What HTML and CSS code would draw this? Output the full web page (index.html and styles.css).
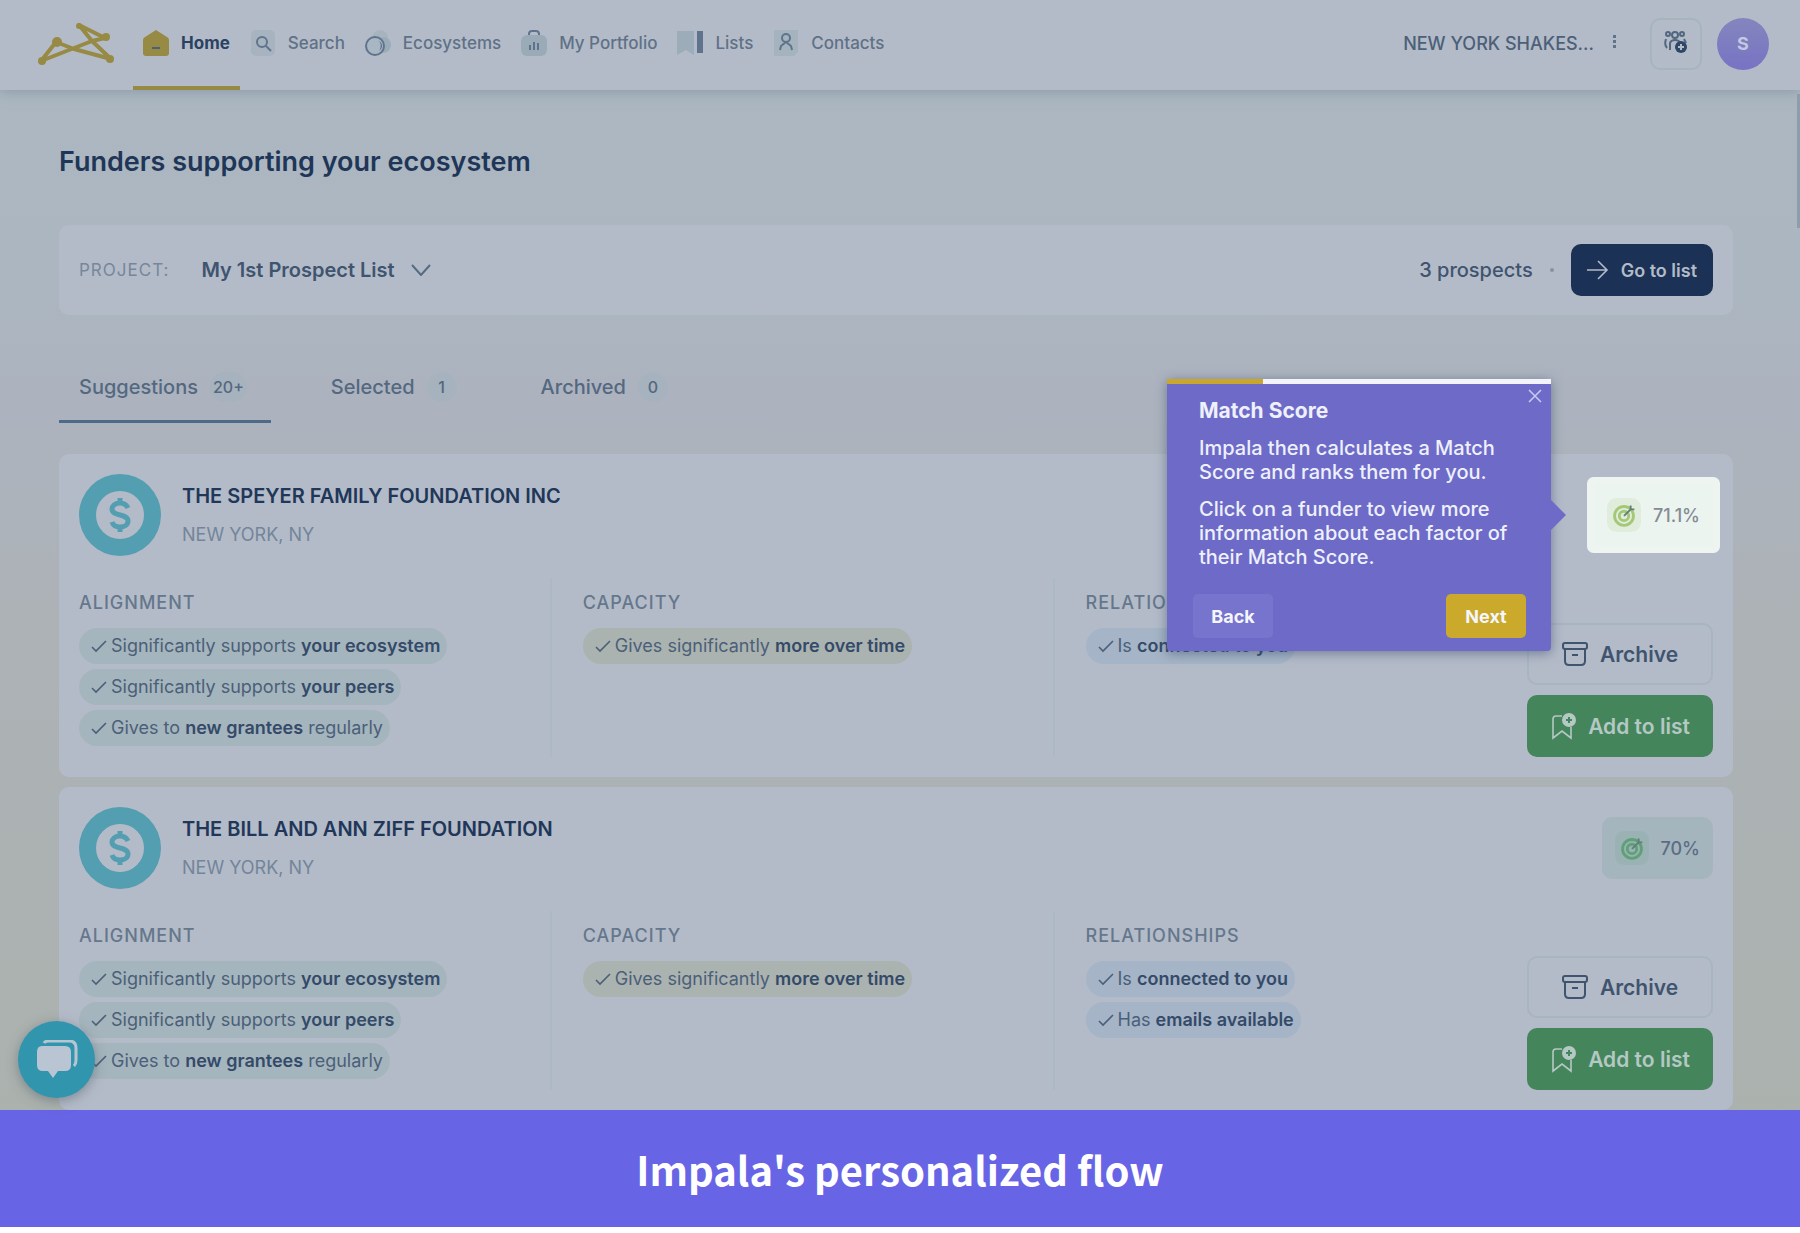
FILE: index.html
```html
<!DOCTYPE html>
<html lang="en">
<head>
    <meta charset="UTF-8">
    <meta name="viewport" content="width=device-width, initial-scale=1.0">
    <title>Impala</title>
    <link rel="stylesheet" href="styles.css">
</head>
<body>
    <!-- shared icons -->
    <svg class="sprite">
        <symbol id="check" viewBox="0 0 18 16"><path d="M2 9l4 4L16 3" fill="none" stroke="currentColor" stroke-width="1.6"/></symbol>
        <symbol id="dollar" viewBox="0 0 82 82">
            <circle cx="41" cy="41" r="41" fill="#549eb1"/>
            <circle cx="41" cy="41" r="24" fill="#b4bbc8"/>
            <path d="M49 34c-2-4-5-5-8-5-5 0-8 3-8 6 0 8 16 4 16 12 0 4-4 6-8 6s-7-2-8-5M41 24v6M41 52v6" fill="none" stroke="#549eb1" stroke-width="5"/>
        </symbol>
        <symbol id="target" viewBox="0 0 36 36">
            <rect width="36" height="36" rx="10" fill="currentColor" opacity=".14"/>
            <g fill="none" stroke="currentColor">
                <circle cx="18" cy="19" r="10" stroke-width="3"/>
                <circle cx="18" cy="19" r="5" stroke-width="3"/>
            </g>
            <path d="M18 19l7-7v-4M25 12h4" fill="none" stroke="#5f7f78" stroke-width="2"/>
        </symbol>
        <symbol id="archive" viewBox="0 0 26 26">
            <g fill="none" stroke="currentColor" stroke-width="2">
                <rect x="1" y="2" width="24" height="6" rx="2"/>
                <path d="M3 8v12q0 4 4 4h12q4 0 4-4V8M10 14h6"/>
            </g>
        </symbol>
        <symbol id="bookmark" viewBox="0 0 26 28">
            <path d="M12 4H6q-3 0-3 3v19l9-7 9 7V15" fill="none" stroke="currentColor" stroke-width="1.6"/>
            <circle cx="19" cy="8" r="7" fill="currentColor"/>
            <path d="M19 5v6M16 8h6" stroke="#45855c" stroke-width="2"/>
        </symbol>
    </svg>

    <div class="app">
        <header>
            <a href="#" class="logo" aria-label="Impala">
                <svg width="76" height="44" viewBox="0 0 76 44">
                    <path d="M3 39L18 20 36 27 73 37 54 19 41 3 67 16 54 19 3 39" fill="none" stroke="#978a45" stroke-width="4" stroke-linejoin="round"/>
                    <g fill="#978a45"><circle cx="4" cy="39" r="4"/><circle cx="19" cy="20" r="5"/><circle cx="41" cy="4" r="3"/><circle cx="68" cy="15" r="4"/><circle cx="72" cy="37" r="4"/></g>
                </svg>
            </a>
            <nav>
                <a href="#" class="active">
                    <svg width="26" height="26" viewBox="0 0 26 26"><path d="M13 0l11 7q2 1 2 3v13q0 3-3 3H3q-3 0-3-3V10q0-2 2-3z" fill="#978a45"/><path d="M9 18h8" stroke="#4c6179" stroke-width="2"/></svg>
                    Home
                </a>
                <a href="#">
                    <svg width="26" height="26" viewBox="0 0 26 26"><rect x="1" width="24" height="26" rx="5" fill="#a7b4c0"/><g fill="none" stroke="#5f748c" stroke-width="2"><circle cx="12" cy="12" r="5"/><path d="M16 16l5 5"/></g></svg>
                    Search
                </a>
                <a href="#">
                    <svg width="26" height="26" viewBox="0 0 26 26"><circle cx="15" cy="8" r="8" fill="#a7b4c0"/><circle cx="18" cy="15" r="8" fill="#9aabb9"/><circle cx="10" cy="16" r="9" fill="#a9b6c3" stroke="#5f748c" stroke-width="2"/><path d="M12 10c4 2 5 6 2 11 4-3 5-8-2-11z" fill="#5f748c"/></svg>
                    Ecosystems
                </a>
                <a href="#">
                    <svg width="26" height="26" viewBox="0 0 26 26"><path d="M8 7V4q0-3 3-3h4q3 0 3 3v3" fill="none" stroke="#5f748c" stroke-width="2"/><rect y="5" width="26" height="21" rx="6" fill="#9aabb7"/><path d="M9 20v-5M13 20v-8M17 20v-7" stroke="#5f748c" stroke-width="2"/></svg>
                    My Portfolio
                </a>
                <a href="#">
                    <svg width="26" height="26" viewBox="0 0 26 26"><path d="M0 1h17v24l-8-5-9 5z" fill="#9cacb8"/><path d="M20 1h6v22h-6z" fill="#5f748c"/></svg>
                    Lists
                </a>
                <a href="#">
                    <svg width="26" height="26" viewBox="0 0 26 26"><path d="M1 0h24v22l-4 4H1z" fill="#a5b3bf"/><g fill="none" stroke="#5f748c" stroke-width="2"><circle cx="13" cy="8" r="4"/><path d="M7 20l1-4 5-4 5 4 1 4"/></g></svg>
                    Contacts
                </a>
            </nav>
            <div class="account">
                <span class="org">NEW YORK SHAKES...</span>
                <button class="dots" aria-label="More">
                    <svg width="6" height="16" viewBox="0 0 6 16" fill="#5f748a"><rect x="1" y="1" width="3" height="3"/><rect x="1" y="6" width="3" height="3"/><rect x="1" y="11" width="3" height="3"/></svg>
                </button>
                <button class="invite" aria-label="Invite people">
                    <svg width="26" height="24" viewBox="0 0 26 24">
                        <g fill="none" stroke="#52677f" stroke-width="2"><circle cx="12" cy="5" r="3"/><circle cx="5" cy="4" r="2"/><circle cx="19" cy="4" r="2"/><path d="M7 20v-7q1-3 5-3t5 3M4 18q-3-3-1-9M21 9l2 4"/></g>
                        <circle cx="18" cy="17" r="6" fill="#2f4766"/><path d="M18 14v6M15 17h6" stroke="#b4bbc8" stroke-width="2"/>
                    </svg>
                </button>
                <button class="avatar">S</button>
            </div>
        </header>

        <main>
            <h1>Funders supporting your ecosystem</h1>

            <section class="project">
                <label for="project">PROJECT:</label>
                <select id="project">
                    <option>My 1st Prospect List</option>
                </select>
                <span class="count">3 prospects</span>
                <span class="sep"></span>
                <button class="goto">
                    <svg width="22" height="20" viewBox="0 0 22 20"><path d="M0 10h20M11 1l9 9-9 9" fill="none" stroke="currentColor" stroke-width="1.6"/></svg>
                    Go to list
                </button>
            </section>

            <div class="tabs">
                <button class="tab current">Suggestions <span>20+</span></button>
                <button class="tab">Selected <span>1</span></button>
                <button class="tab">Archived <span>0</span></button>
            </div>

            <article class="card">
                <div class="top">
                    <svg class="coin"><use href="#dollar"/></svg>
                    <div class="who">
                        <h2>THE SPEYER FAMILY FOUNDATION INC</h2>
                        <p>NEW YORK, NY</p>
                    </div>
                    <div class="score spotlight">
                        <svg><use href="#target"/></svg>71.1%
                        <!-- tour step, hangs off the highlighted score -->
                        <div class="tour">
                            <div class="progress"><div class="bar"></div></div>
                            <button class="close" aria-label="Close">
                                <svg width="14" height="14" viewBox="0 0 14 14"><path d="M1 1l12 12M13 1L1 13" stroke="currentColor" stroke-width="1.6"/></svg>
                            </button>
                            <h3>Match Score</h3>
                            <p>Impala then calculates a Match Score and ranks them for you.</p>
                            <p>Click on a funder to view more information about each factor of their Match Score.</p>
                            <div class="steps">
                                <button class="back">Back</button>
                                <button class="next">Next</button>
                            </div>
                        </div>
                    </div>
                </div>
                <div class="factors">
                    <div class="factor">
                        <h4>ALIGNMENT</h4>
                        <p class="pill"><svg><use href="#check"/></svg>Significantly supports <b>your ecosystem</b></p>
                        <p class="pill"><svg><use href="#check"/></svg>Significantly supports <b>your peers</b></p>
                        <p class="pill"><svg><use href="#check"/></svg>Gives to <b>new grantees</b> regularly</p>
                    </div>
                    <div class="factor">
                        <h4>CAPACITY</h4>
                        <p class="pill yellow"><svg><use href="#check"/></svg>Gives significantly <b>more over time</b></p>
                    </div>
                    <div class="factor">
                        <h4>RELATIONSHIPS</h4>
                        <p class="pill blue"><svg><use href="#check"/></svg>Is <b>connected to you</b></p>
                    </div>
                    <div class="actions">
                        <button class="archive"><svg><use href="#archive"/></svg>Archive</button>
                        <button class="add"><svg><use href="#bookmark"/></svg>Add to list</button>
                    </div>
                </div>
            </article>

            <article class="card">
                <div class="top">
                    <svg class="coin"><use href="#dollar"/></svg>
                    <div class="who">
                        <h2>THE BILL AND ANN ZIFF FOUNDATION</h2>
                        <p>NEW YORK, NY</p>
                    </div>
                    <div class="score"><svg><use href="#target"/></svg>70%</div>
                </div>
                <div class="factors">
                    <div class="factor">
                        <h4>ALIGNMENT</h4>
                        <p class="pill"><svg><use href="#check"/></svg>Significantly supports <b>your ecosystem</b></p>
                        <p class="pill"><svg><use href="#check"/></svg>Significantly supports <b>your peers</b></p>
                        <p class="pill"><svg><use href="#check"/></svg>Gives to <b>new grantees</b> regularly</p>
                    </div>
                    <div class="factor">
                        <h4>CAPACITY</h4>
                        <p class="pill yellow"><svg><use href="#check"/></svg>Gives significantly <b>more over time</b></p>
                    </div>
                    <div class="factor">
                        <h4>RELATIONSHIPS</h4>
                        <p class="pill blue"><svg><use href="#check"/></svg>Is <b>connected to you</b></p>
                        <p class="pill blue"><svg><use href="#check"/></svg>Has <b>emails available</b></p>
                    </div>
                    <div class="actions">
                        <button class="archive"><svg><use href="#archive"/></svg>Archive</button>
                        <button class="add"><svg><use href="#bookmark"/></svg>Add to list</button>
                    </div>
                </div>
            </article>
        </main>

        <div class="scroll"></div>
        <button class="chat" aria-label="Chat">
            <svg width="42" height="40" viewBox="0 0 42 40">
                <path d="M8 3Q9 1 13 1h20q7 0 7 7v12q0 4-2 6" fill="none" stroke="#b9c5d3" stroke-width="3"/>
                <path d="M6 6h23q6 0 6 6v13q0 6-6 6h-7l-5 7-5-7H7q-6 0-6-6V12q0-6 5-6z" fill="#b9c5d3"/>
            </svg>
        </button>
    </div>

    <footer>Impala's personalized flow</footer>
</body>
</html>
```

FILE: styles.css
```css
*{
    margin: 0;
    padding: 0;
    box-sizing: border-box;
}
body{
    background-color: #fff;
    font-family: Inter, "Liberation Sans", sans-serif;
    color: #3f546f;
}
button, select{
    font-family: inherit;
    color: inherit;
    background: none;
    border: none;
}
.sprite{
    display: none;
}
.app{
    position: relative;
    background: linear-gradient(#acb7c1 0%, #abb6c0 25%, #acb3bf 35%, #acb2b6 55%, #abb2ae 100%);
}

/* top bar */
header{
    height: 90px;
    display: flex;
    align-items: center;
    padding: 0 31px 0 38px;
    background-color: #b4bbc8;
    box-shadow: 0 2px 12px rgba(110, 130, 145, 0.5);
}
.logo{
    height: 46px;
    margin-right: 19px;
}
nav{
    display: flex;
    align-self: stretch;
}
nav a{
    display: flex;
    align-items: center;
    gap: 12px;
    padding: 0 10px;
    border-bottom: 4px solid transparent;
    font-size: 17px;
    font-weight: 500;
    color: #5f7187;
    text-decoration: none;
}
nav .active{
    color: #2b4262;
    font-weight: 700;
    border-color: #978a45;
}
.account{
    display: flex;
    align-items: center;
    margin-left: auto;
    padding-bottom: 3px;
}
.org{
    font-size: 18px;
    font-weight: 500;
    color: #4c6078;
}
.dots{
    padding: 8px 14px 8px 18px;
}
.invite{
    width: 52px;
    height: 52px;
    margin: 0 15px 0 18px;
    border: 2px solid #a5b4bf;
    border-radius: 10px;
}
.avatar{
    width: 52px;
    height: 52px;
    border-radius: 50%;
    background: linear-gradient(#8386bd, #7873c4);
    color: #c3c9e0;
    font-size: 18px;
    font-weight: 700;
}

main{
    padding: 54px 67px 0 59px;
}
h1{
    font-size: 27px;
    line-height: 36px;
    font-weight: 600;
    color: #1f3658;
}

/* project bar */
.project{
    height: 90px;
    display: flex;
    align-items: center;
    margin-top: 45px;
    padding: 0 20px;
    background-color: #b4bbc8;
    border-radius: 10px;
}
.project label{
    font-size: 17px;
    letter-spacing: 1px;
    color: #76879a;
}
.project select{
    appearance: none;
    margin-left: 32px;
    padding-right: 36px;
    font-size: 20px;
    font-weight: 600;
    background: url("data:image/svg+xml,%3Csvg xmlns='http://www.w3.org/2000/svg' width='20' height='12'%3E%3Cpath d='M1 1l9 10 9-10' fill='none' stroke='%23566b82' stroke-width='2'/%3E%3C/svg%3E") no-repeat right center;
}
.count{
    margin-left: auto;
    font-size: 20px;
    font-weight: 500;
}
.sep{
    width: 4px;
    height: 4px;
    margin: 0 17px;
    border-radius: 50%;
    background-color: #8494a6;
}
.goto{
    height: 52px;
    display: flex;
    align-items: center;
    gap: 12px;
    padding: 0 16px;
    border-radius: 10px;
    background-color: #1b3155;
    color: #b4bbc8;
    font-size: 18px;
    font-weight: 600;
}

/* tabs */
.tabs{
    display: flex;
    gap: 40px;
    margin: 52px 0 31px;
}
.tab{
    display: flex;
    align-items: center;
    gap: 12px;
    padding: 5px 24px 18px 20px;
    border-bottom: 3px solid transparent;
    font-size: 20px;
    font-weight: 500;
    color: #54687f;
}
.tab span{
    min-width: 30px;
    height: 30px;
    padding: 0 3px;
    border-radius: 15px;
    background-color: #a6b2bd;
    font-size: 16px;
    line-height: 30px;
}
.current{
    border-color: #4e6a88;
}

/* funder cards */
.card{
    padding: 20px;
    margin-bottom: 10px;
    background-color: #b4bbc8;
    border-radius: 10px;
}
.card:last-child{
    margin-bottom: 0;
}
.top{
    display: flex;
    align-items: center;
}
.coin{
    width: 82px;
    height: 82px;
}
.who{
    margin-left: 21px;
}
h2{
    font-size: 20px;
    line-height: 26px;
    font-weight: 600;
    color: #213759;
}
.who p{
    margin-top: 14px;
    font-size: 18px;
    line-height: 24px;
    color: #73859a;
}
.score{
    position: relative;
    height: 62px;
    display: flex;
    align-items: center;
    gap: 12px;
    margin-left: auto;
    padding: 0 13px;
    border-radius: 10px;
    background-color: #a5b5be;
    color: #5b6d83;
    font-size: 18px;
    font-weight: 500;
}
.score > svg{
    width: 34px;
    height: 36px;
    color: #5fa177;
}
.spotlight{
    background-color: #ebf4ee;
    box-shadow: 0 0 0 7px #eef5f1;
    border-radius: 2px;
    color: #848b95;
}
.spotlight > svg{
    color: #a5c877;
}
.factors{
    position: relative;
    display: grid;
    grid-template-columns: 4fr 4fr 5fr;
    margin-top: 22px;
}
.factor{
    height: 179px;
}
.factor + .factor{
    margin-left: -32px;
    padding-left: 31px;
    border-left: 2px solid #adb8c5;
}
h4{
    margin: 14px 0 14px;
    font-size: 18px;
    line-height: 22px;
    font-weight: 500;
    letter-spacing: 1px;
    color: #64778c;
}
.pill{
    width: fit-content;
    height: 36px;
    margin-bottom: 5px;
    padding: 0 7px 0 11px;
    border-radius: 18px;
    background-color: #a5b5bd;
    font-size: 18px;
    line-height: 36px;
    color: #4b5f79;
    white-space: nowrap;
}
.pill svg{
    width: 18px;
    height: 16px;
    margin-right: 3px;
    vertical-align: -2px;
}
.pill b{
    font-weight: 600;
    color: #344a69;
}
.yellow{
    background-color: #abb3b0;
}
.blue{
    background-color: #a5b4c6;
}
.actions{
    position: absolute;
    right: 0;
    bottom: 0;
    display: flex;
    flex-direction: column;
    gap: 10px;
}
.actions button{
    width: 186px;
    height: 62px;
    display: flex;
    align-items: center;
    justify-content: center;
    gap: 12px;
    border-radius: 10px;
    font-size: 21px;
    font-weight: 600;
}
.actions svg{
    width: 26px;
    height: 28px;
}
.archive{
    border: 2px solid #a7b4c1;
}
.add{
    background-color: #45855c;
    color: #b4c8c4;
}

/* tour popup */
.tour{
    position: absolute;
    z-index: 2;
    top: -105px;
    right: calc(100% + 43px);
    width: 384px;
    padding: 20px 25px 13px 32px;
    background-color: #6d6bc7;
    border-radius: 4px;
    box-shadow: 0 2px 12px rgba(60, 80, 110, 0.6);
    color: #eef0fc;
    font-size: 20px;
    line-height: 24px;
}
.tour::after{
    content: "";
    position: absolute;
    left: 100%;
    top: 121px;
    border: 15px solid transparent;
    border-left-color: #6d6bc7;
    border-right: none;
}
.progress{
    position: absolute;
    top: 0;
    left: 0;
    width: 100%;
    height: 5px;
    background-color: #f2f3fb;
}
.bar{
    width: 25%;
    height: 100%;
    background-color: #c9a62e;
}
.close{
    position: absolute;
    top: 10px;
    right: 9px;
    line-height: 14px;
    color: #c8c9ee;
}
.tour h3{
    font-size: 21px;
    line-height: 24px;
    font-weight: 700;
}
.tour p{
    margin-top: 13px;
}
.steps{
    display: flex;
    justify-content: space-between;
    margin: 25px 0 0 -6px;
}
.steps button{
    width: 80px;
    height: 44px;
    border-radius: 5px;
    color: #f5f6fd;
    font-size: 18px;
    font-weight: 700;
}
.back{
    background-color: #7674cc;
}
.next{
    background-color: #caa92b;
}

.scroll{
    position: absolute;
    top: 94px;
    right: 0;
    width: 3px;
    height: 134px;
    background-color: #8c9dab;
}
.chat{
    position: absolute;
    left: 18px;
    bottom: 12px;
    width: 77px;
    height: 77px;
    display: flex;
    align-items: center;
    justify-content: center;
    border-radius: 50%;
    background-color: #3295ae;
    box-shadow: 0 3px 12px rgba(80, 90, 100, 0.5);
}

footer{
    padding: 31px 0 30px;
    margin-bottom: 6px;
    background-color: #6864e6;
    color: #fff;
    font-family: "Noto Sans CJK SC", "Open Sans", sans-serif;
    font-size: 40px;
    line-height: 56px;
    font-weight: 700;
    text-align: center;
}
```
